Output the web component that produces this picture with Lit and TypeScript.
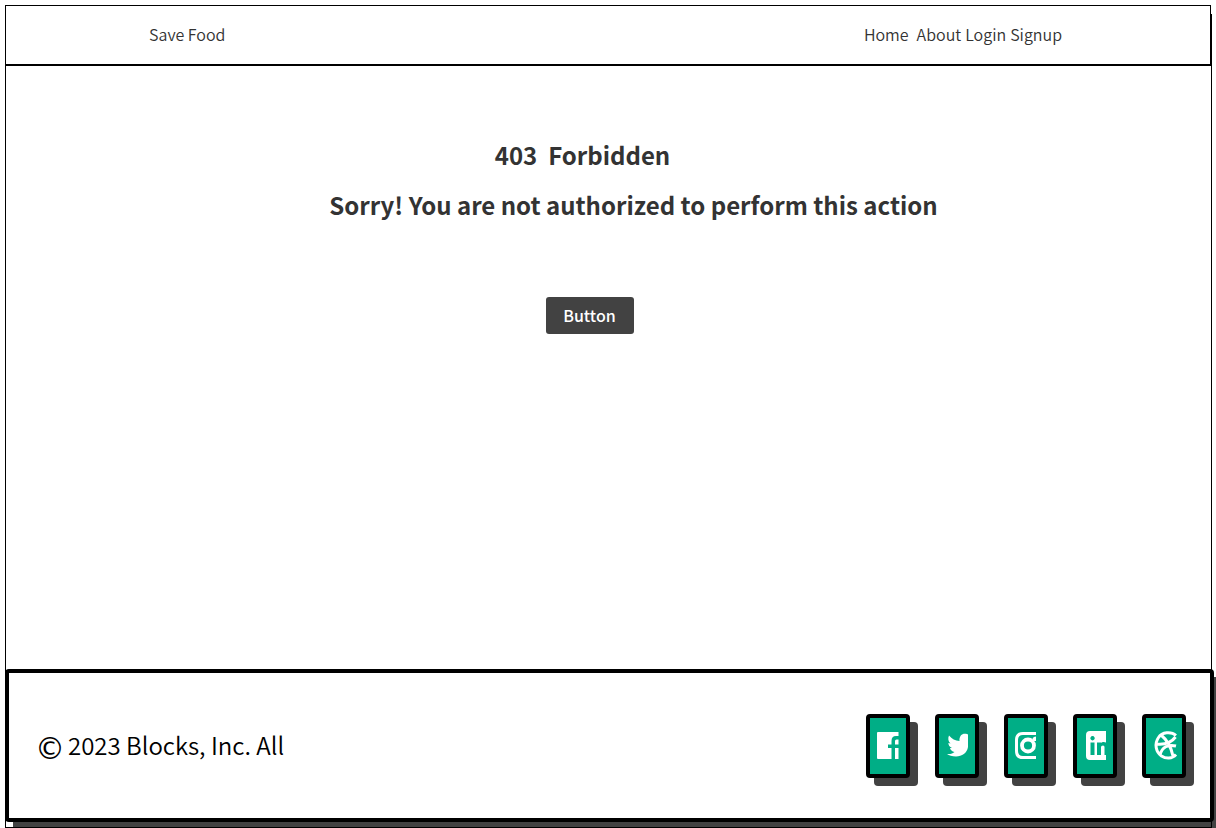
import { LitElement, html, css, svg } from "lit";
import { customElement } from "lit/decorators.js";

const icons = [
  { name: "Facebook", shape: svg`<path fill-rule="evenodd" d="M8 14H28.500V18H26Q21.500 18 21.500 23V26.500H18V30H21.500V41H8Q7 41 7 40V15Q7 14 8 14ZM25 23Q25 21.500 26.500 21.500H28.500V26.500H25ZM25 30H28.500V41H25Z"/>` },
  { name: "Twitter", shape: svg`<path d="M29 16.500V29C28 35 23 38.500 17 38.500C13 38.500 10 37.500 8 36C11.500 36.300 14 35.500 15.500 34C13 33.500 11.500 32 11 30H13C10.500 29 9.500 27 9.300 25L11.500 25.500C9 23.500 8.800 20 10 17.500C13 21 16 22.500 20.500 23C20 18 23 15.500 26 15.700C27.500 15.800 28.500 16.200 29 16.500Z"/>` },
  { name: "Instagram", shape: svg`<g fill="none" stroke="currentColor" stroke-width="3"><path d="M28 15.500H15Q8.500 15.500 8.500 22V33Q8.500 39.500 15 39.500H28"/><circle cx="20" cy="27.500" r="6" stroke-width="3.800"/></g><path d="M28 18.500V23H25L24.500 20.500Q25.500 18.500 28 18.500Z"/>` },
  { name: "LinkedIn", shape: svg`<path fill-rule="evenodd" d="M13 13H29V24.500C27 23.500 25 24 24 25V24.500H20V37H24V29Q24 27.500 26 27.500Q27.500 27.500 27.500 29V37H29V42H13Q9 42 9 38V17Q9 13 13 13ZM15.500 18A2.200 2.200 0 1 0 15.600 18ZM13.500 24.500V37H17.500V24.500Z"/>` },
  { name: "Dribbble", shape: svg`<path fill="none" stroke="currentColor" stroke-width="3" d="M30 17.500C25 13 16 14 12.500 19.500C8 26 10 34 15.500 38C20 41 26 41 30 36.500M15 17C20 21 25 29 27 38M10 26C18 27 25 25 29.500 19M14 37C16 29 22 26 30 28"/>` },
];

@customElement("app-root")
export class AppRoot extends LitElement {
  static styles = css`
    :host { display: block; overflow: hidden; font-family: "Noto Sans CJK SC", "Noto Sans", sans-serif; color: #333; background: #fff; }
    * { box-sizing: border-box; }
    .page { position: relative; display: flex; flex-direction: column; min-height: calc(100vh - 5px); margin: 5px 4px 0 5px; padding-bottom: 6px; }
    .page::after { content: ""; position: absolute; inset: 9px 0 0; border: 1px solid #000; border-top: 0; pointer-events: none; }
    header { display: flex; justify-content: space-between; align-items: center; height: 61px; margin-right: 1px; padding: 0 148px 2px 143px; border: 1px solid #000; border-bottom-width: 2px; font-size: 16px; line-height: 24px; font-weight: 350; }
    a { color: inherit; text-decoration: none; }
    .links { display: flex; gap: 4px; }
    .home { margin-right: 4px; }
    main { flex: 1; display: grid; justify-items: center; align-content: start; padding: 69px 38px 40px 0; }
    h1, h2 { margin: 0; font-size: 24px; line-height: 40px; font-weight: 700; }
    h1 { white-space: pre; margin-right: 14px; }
    h2 { margin-top: 10px; margin-left: 88px; }
    button { margin-top: 72px; width: 88px; height: 37px; border: 0; border-radius: 3px; background: #424242; color: #fff; font: 500 16px/24px "Noto Sans CJK SC", sans-serif; padding: 0 0 2px; }
    footer { display: flex; align-items: center; justify-content: space-between; height: 153px; margin-right: -2px; padding: 0 24px 0 26px; border: 4px solid #000; border-radius: 4px; background: #fff; box-shadow: 8px 8px #424242; color: #000; }
    p { display: flex; align-items: center; gap: 3px; margin: 0; padding-bottom: 2px; font-size: 24px; line-height: 40px; font-weight: 350; }
    .mark { font-family: "DejaVu Sans", sans-serif; font-size: 30px; font-weight: 400; padding-top: 8px; line-height: 32px; }
    .social { display: flex; gap: 25px; }
    .card { display: block; width: 44px; height: 64px; border: 4px solid #000; border-radius: 4px; background: #00ae86; color: #fff; box-shadow: 8px 8px #424242; }
    svg { display: block; width: 100%; height: 100%; fill: currentColor; }
  `;

  render() {
    return html`<div class="page">
      <header>
        <a href="#">Save Food</a>
        <nav class="links"><a class="home" href="#">Home</a><a href="#">About</a><a href="#">Login</a><a href="#">Signup</a></nav>
      </header>
      <main>
        <h1>403  Forbidden</h1>
        <h2>Sorry! You are not authorized to perform this action</h2>
        <button type="button">Button</button>
      </main>
      <footer>
        <p><span class="mark">©</span><span>2023 Blocks, Inc. All</span></p>
        <nav class="social">${icons.map((i) => html`<a class="card" href="#" aria-label=${i.name}><svg viewBox="0 0 36 56" aria-hidden="true">${i.shape}</svg></a>`)}</nav>
      </footer>
    </div>`;
  }
}
